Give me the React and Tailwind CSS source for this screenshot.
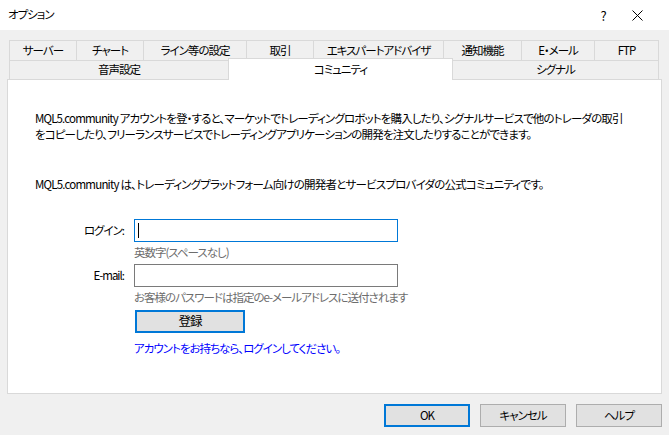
import React from "react";

const ROW1 = [
  { label: "サーバー", w: "w-[67px]" },
  { label: "チャート", w: "w-[67px]" },
  { label: "ライン等の設定", w: "w-[103px]" },
  { label: "取引", w: "w-[67px]" },
  { label: "エキスパートアドバイザ", w: "w-[130px]" },
  { label: "通知機能", w: "w-[78px]" },
  { label: "E・メール", w: "w-[73px]" },
  { label: "FTP", w: "w-[64px]" }
];

const FONT = "font-['Noto_Sans_CJK_JP','Noto_Sans',sans-serif] [font-feature-settings:'palt']";

const DialogButton = ({ children, primary = false }) => (
  <button
    type="button"
    className={`h-[23px] w-[86px] bg-[#e1e1e1] text-[11.5px] leading-none text-black ${
      primary ? "border-2 border-[#0078d7]" : "border border-[#adadad]"
    }`}
  >
    {children}
  </button>
);

export default function App() {
  return (
    <div
      className={`flex h-[435px] w-[669px] flex-col overflow-hidden bg-[#f0f0f0] text-[11.5px] tracking-[-1px] text-black ${FONT}`}
    >
      {/* title bar */}
      <div className="flex h-[30px] items-center bg-white">
        <span className="pl-[8px] leading-none">オプション</span>
        <span className="ml-auto w-[14px] text-center text-[13px] leading-none">?</span>
        <span className="ml-[21px] mr-[26px] flex h-[12px] w-[12px] items-center justify-center">
          <svg width="11" height="11" viewBox="0 0 11 11" fill="none" stroke="#000" strokeWidth="1">
            <path d="M0.5 0.5 L10.5 10.5 M10.5 0.5 L0.5 10.5" />
          </svg>
        </span>
      </div>

      <div className="px-[7px] pt-[10px]">
        {/* tabs */}
        <div className="ml-[2px] w-[650px]">
          <div className="flex h-[21px] border-y border-l border-[#d9d9d9]">
            {ROW1.map((tab) => (
              <div
                key={tab.label}
                className={`${tab.w} flex items-center justify-center border-r border-[#d9d9d9] leading-none`}
              >
                {tab.label}
              </div>
            ))}
          </div>
          <div className="flex h-[18px] items-start border-l border-[#d9d9d9]">
            <div className="flex h-[18px] w-[218px] items-center justify-center leading-none">音声設定</div>
            <div className="relative z-10 -mt-[3px] flex h-[22px] w-[225px] items-start justify-center border-x border-t border-[#d9d9d9] bg-white pt-[5px] leading-none">
              コミュニティ
            </div>
            <div className="flex h-[18px] w-[206px] items-center justify-center border-r border-[#d9d9d9] leading-none">
              シグナル
            </div>
          </div>
        </div>

        {/* panel */}
        <div className="h-[315px] w-[655px] border border-[#d9d9d9] bg-white pl-[27px] pt-[30px]">
          <p className="leading-[16px] tracking-[-0.85px]">
            <span className="block whitespace-nowrap">
              MQL5.community アカウントを登・すると、マーケットでトレーディングロボットを購入したり、シグナルサービスで他のトレーダの取引
            </span>
            <span className="block whitespace-nowrap">
              をコピーしたり、フリーランスサービスでトレーディングアプリケーションの開発を注文したりすることができます。
            </span>
          </p>
          <p className="mt-[34px] whitespace-nowrap leading-[16px] tracking-[-0.8px]">
            MQL5.community は、トレーディングプラットフォーム向けの開発者とサービスプロバイダの公式コミュニティです。
          </p>

          <div className="mt-[27px]">
            <div className="flex items-center">
              <span className="w-[89px] text-right leading-none">ログイン:</span>
              <div className="ml-[10px] flex h-[23px] w-[264px] items-center border border-[#0078d7] pl-[3px]">
                <span className="h-[15px] w-px bg-black" />
              </div>
            </div>
            <p className="ml-[99px] mt-[2px] leading-[16px] text-[#6d6d6d]">英数字(スペースなし)</p>

            <div className="mt-[4px] flex items-center">
              <span className="w-[89px] text-right leading-none">E-mail:</span>
              <div className="ml-[10px] h-[23px] w-[264px] border border-[#7a7a7a]" />
            </div>
            <p className="ml-[99px] mt-[2px] whitespace-nowrap leading-[16px] text-[#6d6d6d]">
              お客様のパスワードは指定のe-メールアドレスに送付されます
            </p>

            <button
              type="button"
              className="ml-[100px] mt-[5px] block h-[23px] w-[110px] border-2 border-[#0078d7] bg-[#e1e1e1] text-[12.5px] leading-none"
            >
              登録
            </button>
            <p className="ml-[99px] mt-[7px] leading-[16px] text-[#0000ff]">
              アカウントをお持ちなら、ログインしてください。
            </p>
          </div>
        </div>
      </div>

      {/* footer buttons */}
      <div className="mt-[10px] flex justify-end gap-[10px] pr-[7px]">
        <DialogButton primary>OK</DialogButton>
        <DialogButton>キャンセル</DialogButton>
        <DialogButton>ヘルプ</DialogButton>
      </div>
    </div>
  );
}
